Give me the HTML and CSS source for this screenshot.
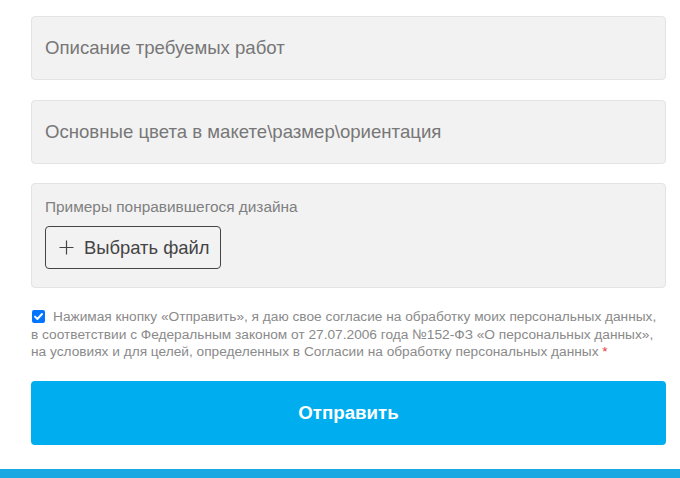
FILE: index.html
```html
<!DOCTYPE html>
<html lang="ru">
<head>
<meta charset="utf-8">
<link rel="stylesheet" href="styles.css">
</head>
<body>
<form class="form">
  <div class="field"><span class="placeholder">Описание требуемых работ</span></div>
  <div class="field"><span class="placeholder">Основные цвета в макете\размер\ориентация</span></div>
  <div class="field field-file">
    <div class="file-label">Примеры понравившегося дизайна</div>
    <div class="file-btn"><svg class="plus" viewBox="0 0 15 15" width="15" height="15"><path d="M7.5 0.5 V14.5 M0.5 7.5 H14.5" stroke="#444" stroke-width="1.2" fill="none"/></svg>Выбрать файл</div>
  </div>
  <p class="consent"><span class="check"><svg viewBox="0 0 13 13" width="13" height="13"><rect x="0" y="0" width="13" height="13" rx="2" fill="#0075ff"/><path d="M3 6.6 L5.4 9 L10 4" fill="none" stroke="#fff" stroke-width="1.9" stroke-linecap="round" stroke-linejoin="round"/></svg></span>Нажимая кнопку «Отправить», я даю свое согласие на обработку моих персональных данных, в соответствии с Федеральным законом от 27.07.2006 года №152-ФЗ «О персональных данных», на условиях и для целей, определенных в Согласии на обработку персональных данных <span class="req">*</span></p>
  <div class="submit">Отправить</div>
</form>
<div class="bottom-bar"></div>
</body>
</html>
```
FILE: styles.css
```css
html, body {
  margin: 0;
  padding: 0;
  background: #fff;
  font-family: "Liberation Sans", Arial, sans-serif;
}
.form {
  width: 635px;
  margin-left: 31px;
  padding-top: 16px;
  display: flex;
  flex-direction: column;
}
.field {
  box-sizing: border-box;
  height: 64px;
  background: #f2f2f2;
  border: 1px solid #e3e3e3;
  border-radius: 4px;
  padding: 0 13px;
  display: flex;
  align-items: center;
  margin-bottom: 20px;
}
.placeholder {
  font-size: 18.6px;
  color: #777;
}
.field-file {
  height: 105px;
  margin-bottom: 0;
  margin-top: -1px;
  flex-direction: column;
  align-items: flex-start;
  padding-top: 14px;
}
.file-label {
  font-size: 15.4px;
  color: #808080;
  line-height: 18px;
}
.file-btn {
  margin-top: 10px;
  box-sizing: border-box;
  height: 43px;
  width: 176px;
  border: 1px solid #444;
  border-radius: 4px;
  display: flex;
  align-items: center;
  padding-left: 13px;
  font-size: 18.4px;
  color: #444;
}
.plus {
  display: block;
  margin-right: 10px;
}
.consent {
  margin: 20px 0 0;
  font-size: 13.7px;
  line-height: 17.5px;
  color: #8a8a8a;
}
.check {
  display: inline-block;
  vertical-align: -2px;
  margin: 0 8px 0 1px;
}
.check svg { display: block; }
.req { color: #e53935; }
.submit {
  margin-top: 20px;
  height: 64px;
  border-radius: 4px;
  background: #00aeef;
  color: #fff;
  font-weight: 700;
  font-size: 18.7px;
  display: flex;
  align-items: center;
  justify-content: center;
}
.bottom-bar {
  margin-top: 24px;
  height: 9px;
  background: #1aa8e2;
}
```
